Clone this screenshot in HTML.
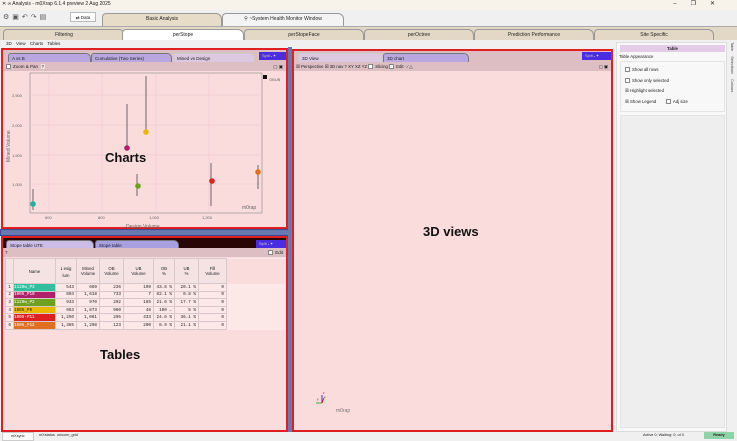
<!DOCTYPE html>
<html><head><meta charset="utf-8"><style>
*{box-sizing:border-box;margin:0;padding:0}
body{width:737px;height:439px;overflow:hidden;background:#f0f0f0;font-family:"Liberation Sans",sans-serif;font-size:5px;color:#222;position:relative}
.a{position:absolute}
.tab{position:absolute;border:1px solid #999;border-bottom:none;border-radius:4px 6px 0 0;text-align:center;font-size:5px;line-height:11px}
.pt{position:absolute;height:9px;border-radius:3px 5px 0 0;font-size:4.5px;line-height:9px;padding-left:3px;border:1px solid #777;border-bottom:none}
.red{position:absolute;border:2px solid #e02020;background:#fadcdc}
.bar{position:absolute;background:#ddbfc3}
.cb{display:inline-block;width:5px;height:5px;border:1px solid #888;background:#fff;vertical-align:middle;margin-right:2px}
table{border-collapse:collapse;font-size:4.3px}
td{border:1px solid #d9c8cb;height:7.6px;text-align:right;padding-right:2px;font-family:"Liberation Mono",monospace}
th{border:1px solid #d9c8cb;background:#f5e3e4;font-weight:normal;height:25px;text-align:center;font-size:4.3px}
.big{position:absolute;font-weight:bold;font-size:13px;color:#111}
</style></head><body>
<div class="a" style="left:0;top:0;width:737px;height:10px;background:#f7f3ea"></div>
<div class="a" style="left:2px;top:1px;font-size:5px">✕ ∞ Analysis - m0Xrap 6.1.4 preview 2 Aug 2025</div>
<div class="a" style="right:8px;top:0;font-size:6px;letter-spacing:14px">–❐✕</div>
<div class="a" style="left:0;top:10px;width:737px;height:16px;background:#f0f0f0"></div>
<div class="a" style="left:3px;top:13px;width:90px;height:10px;font-size:7px;color:#555;letter-spacing:3px">⚙▣↶↷▤</div>
<div class="a" style="left:70px;top:12px;width:26px;height:10px;border:1px solid #bbb;background:#fff;font-size:4.5px;line-height:9px;text-align:center">⇄ Data</div>
<div class="tab" style="left:102px;top:13px;width:120px;height:13px;background:#e6dcc8">Basic Analysis</div>
<div class="tab" style="left:222px;top:13px;width:122px;height:13px;background:#f4f4f4">⚲ ~System Health Monitor Window</div>
<div class="a" style="left:0;top:26px;width:737px;height:14px;background:#e2d8c5;border-top:1px solid #aaa"></div>
<div class="tab" style="left:3px;top:29px;width:122px;height:11px;background:#e2d8c5">Filtering</div>
<div class="tab" style="left:122px;top:29px;width:122px;height:11px;background:#fff">perStope</div>
<div class="tab" style="left:244px;top:29px;width:120px;height:11px;background:#e2d8c5">perStopeFace</div>
<div class="tab" style="left:364px;top:29px;width:110px;height:11px;background:#e2d8c5">perOctree</div>
<div class="tab" style="left:474px;top:29px;width:120px;height:11px;background:#e2d8c5">Prediction Performance</div>
<div class="tab" style="left:594px;top:29px;width:120px;height:11px;background:#e2d8c5">Site Specific</div>
<div class="a" style="left:6px;top:41px;font-size:4.5px;word-spacing:3px">3D&nbsp;View Charts Tables</div>

<!-- charts panel -->
<div class="red" style="left:1px;top:48px;width:287px;height:181px">
 <div class="bar" style="left:0;top:0;width:283px;height:12px"></div>
 <div class="pt" style="left:5px;top:3px;width:83px;background:#b9a8e0">A vs B</div>
 <div class="pt" style="left:88px;top:3px;width:81px;background:#b9a8e0">Cumulative (Two Series)</div>
 <div class="pt" style="left:170px;top:3px;width:82px;background:#dcc8e0;border-color:#ccc">Mined vs Design</div>
 <div class="a" style="left:256px;top:2px;width:27px;height:8px;background:#4a2de0;color:#ccc;font-size:4px;line-height:8px;padding-left:3px">Split <b style="color:#fff">- +</b></div>
 <div class="bar" style="left:0;top:12px;width:283px;height:9px;font-size:4.5px;line-height:9px;padding-left:3px"><span class="cb"></span>Zoom &amp; Pan&nbsp;&nbsp;<span style="background:#f0e0e0;padding:0 1px">?</span><span style="position:absolute;right:3px">▢ ▣</span></div>
</div>
<svg class="a" style="left:0;top:70px" width="290" height="160">
 <rect x="30" y="3" width="232" height="140" fill="#fadcdc" stroke="#888" stroke-width=".6"/>
 <g stroke="#e8c6ca" stroke-width=".5"><line x1="49" y1="3" x2="49" y2="143"/><line x1="102" y1="3" x2="102" y2="143"/><line x1="156" y1="3" x2="156" y2="143"/><line x1="209" y1="3" x2="209" y2="143"/><line x1="30" y1="25" x2="262" y2="25"/><line x1="30" y1="55" x2="262" y2="55"/><line x1="30" y1="85" x2="262" y2="85"/><line x1="30" y1="114" x2="262" y2="114"/></g>
 <g font-size="4" fill="#666" font-family="Liberation Sans"><text x="12" y="27">2,500</text><text x="12" y="57">2,000</text><text x="12" y="87">1,500</text><text x="12" y="116">1,000</text><text x="45" y="149">600</text><text x="98" y="149">800</text><text x="149" y="149">1,000</text><text x="202" y="149">1,200</text><text x="126" y="158" font-size="5">Design Volume</text><text x="10" y="92" font-size="5" transform="rotate(-90 10 92)">Mined Volume</text><text x="242" y="139" font-size="5">m0rap</text><text x="269" y="11">OBUB</text></g>
 <rect x="263" y="5" width="4" height="4" fill="#111"/>
 <g stroke="#333" stroke-width=".7"><line x1="33" y1="119" x2="33" y2="140"/><line x1="127" y1="34" x2="127" y2="78"/><line x1="146" y1="6" x2="146" y2="62"/><line x1="137" y1="104" x2="137" y2="126"/><line x1="211" y1="93" x2="211" y2="136"/><line x1="258" y1="95" x2="258" y2="119"/></g>
 <circle cx="33" cy="134" r="2.8" fill="#20b0a0"/><circle cx="127" cy="78" r="2.8" fill="#b0206a"/><circle cx="146" cy="62" r="2.8" fill="#e8b800"/><circle cx="138" cy="116" r="2.8" fill="#70a020"/><circle cx="212" cy="111" r="2.8" fill="#e02020"/><circle cx="258" cy="102" r="2.8" fill="#e07020"/>
</svg>
<div class="big" style="left:105px;top:150px">Charts</div>
<div class="a" style="left:0;top:229px;width:289px;height:7px;background:#6878b0;border:1px solid #3a4a90"></div>
<div class="a" style="left:288px;top:47px;width:4px;height:385px;background:#6878b0"></div>

<!-- tables panel -->
<div class="red" style="left:1px;top:236px;width:287px;height:196px">
 <div class="a" style="left:0;top:0;width:283px;height:10px;background:#2a0505"></div>
 <div class="pt" style="left:3px;top:2px;width:88px;background:#cbbce8">Stope table UTE</div>
 <div class="pt" style="left:92px;top:2px;width:84px;background:#a8a0e0">Stope table</div>
 <div class="a" style="left:253px;top:2px;width:30px;height:8px;background:#4a2de0;color:#ccc;font-size:4px;line-height:8px;padding-left:3px">Split <b style="color:#fff">- +</b></div>
 <div class="bar" style="left:0;top:10px;width:283px;height:9px;font-size:4.5px;padding-left:2px;line-height:9px">?<span style="position:absolute;right:3px"><span class="cb"></span>Edit</span></div>
 <table class="a" style="left:2px;top:20px;background:#fde8e8">
 <tr><th style="width:8px"></th><th style="width:42px">Name</th><th style="width:21px">🠗 esig<br>lum</th><th style="width:23px">Mined<br>Volume</th><th style="width:24px">OB<br>Volume</th><th style="width:30px">UB<br>Volume</th><th style="width:21px">OB<br>%</th><th style="width:24px">UB<br>%</th><th style="width:28px">Fill<br>Volume</th><th style="width:58px;border:none;background:#fadcdc"></th></tr>
 <tr><td>1</td><td style="background:#30c0a0;text-align:left;color:#fff">1120w_P3</td><td>543</td><td>669</td><td>236</td><td>109</td><td>43.6 %</td><td>20.1 %</td><td>0</td></tr>
 <tr><td>2</td><td style="background:#b0206a;text-align:left;color:#fff">1005_P10</td><td>894</td><td>1,618</td><td>733</td><td>7</td><td>82.1 %</td><td>0.8 %</td><td>0</td></tr>
 <tr><td>3</td><td style="background:#70a020;text-align:left;color:#fff">1120w_P2</td><td>933</td><td>970</td><td>202</td><td>165</td><td>21.6 %</td><td>17.7 %</td><td>0</td></tr>
 <tr><td>4</td><td style="background:#e8b800;text-align:left">1005_P9</td><td>963</td><td>1,873</td><td>960</td><td>48</td><td>100 …</td><td>5 %</td><td>0</td></tr>
 <tr><td>5</td><td style="background:#e02020;text-align:left;color:#fff">1005-P11</td><td>1,250</td><td>1,061</td><td>295</td><td>433</td><td>24.6 %</td><td>36.1 %</td><td>0</td></tr>
 <tr><td>6</td><td style="background:#e07020;text-align:left;color:#fff">1005_P12</td><td>1,385</td><td>1,208</td><td>123</td><td>290</td><td>8.9 %</td><td>21.1 %</td><td>0</td></tr>
 </table>
</div>
<div class="big" style="left:100px;top:347px">Tables</div>

<!-- 3D panel -->
<div class="red" style="left:292px;top:49px;width:321px;height:383px">
 <div class="bar" style="left:0;top:0;width:317px;height:11px"></div>
 <div class="pt" style="left:4px;top:2px;width:85px;background:#dcc8e0;border-color:#ccc">3D View</div>
 <div class="pt" style="left:89px;top:2px;width:86px;background:#b9a8e0">3D chart</div>
 <div class="a" style="left:288px;top:1px;width:29px;height:8px;background:#4a2de0;color:#ccc;font-size:4px;line-height:8px;padding-left:3px">Split <b style="color:#fff">- +</b></div>
 <div class="bar" style="left:0;top:11px;width:317px;height:9px;font-size:4.3px;line-height:9px;padding-left:2px">☒ Perspective ☒ 3D nav ? XY XZ YZ <span class="cb"></span>Slicing <span class="cb"></span>Edit · ⁄ △<span style="position:absolute;right:3px">▢ ▣</span></div>
 <svg class="a" style="left:14px;top:337px" width="20" height="20"><line x1="8" y1="15" x2="14" y2="15" stroke="#4a4" stroke-width="1"/><line x1="14" y1="15" x2="14" y2="7" stroke="#33c" stroke-width="1"/><line x1="14" y1="15" x2="16" y2="10" stroke="#d22" stroke-width="1"/><text x="15" y="6" font-size="3">z</text><text x="9" y="12" font-size="3">y</text><text x="16" y="10" font-size="3">x</text></svg>
 <div class="a" style="left:42px;top:357px;font-size:5px;color:#777">m0rap</div>
</div>
<div class="big" style="left:423px;top:224px">3D views</div>

<!-- right panel -->
<div class="a" style="left:616px;top:42px;width:111px;height:390px;background:#f8f8f8;border:1px solid #ddd">
 <div class="a" style="left:3px;top:2px;width:105px;height:7px;background:#e4cce8;text-align:center;font-weight:bold;font-size:4.3px;line-height:7px">Table</div>
 <div class="a" style="left:2px;top:11px;font-size:4.3px">Table Appearance</div>
 <div class="a" style="left:3px;top:18px;width:105px;height:51px;border:1px solid #e4e4e4;font-size:4.3px;line-height:10.5px;padding:3px 0 0 4px">
  <div><span class="cb"></span>Show all rows</div><div><span class="cb"></span>Show only selected</div><div>☒ Highlight selected</div><div>☒ Show Legend &nbsp;&nbsp;&nbsp;&nbsp;&nbsp;&nbsp;&nbsp;<span class="cb"></span>Adj size</div>
 </div>
 <div class="a" style="left:3px;top:72px;width:105px;height:313px;background:#eee;border:1px solid #e4e4e4"></div>
</div>
<div class="a" style="left:728px;top:42px;width:8px;height:80px;font-size:3.8px;color:#444;writing-mode:vertical-rl;line-height:8px">Table &nbsp;&nbsp;&nbsp; Selections &nbsp;&nbsp;&nbsp; Colours</div>

<!-- status bar -->
<div class="a" style="left:0;top:432px;width:737px;height:7px;background:#f0f0f0;font-size:3.8px;line-height:7px">
 <span style="position:absolute;left:2px;border:1px solid #ccc;padding:0 8px;background:#fafafa">mXsync</span>
 <span style="position:absolute;left:39px">mXstatus &nbsp;unicorn_grid</span>
 <span style="position:absolute;left:643px">Active 0; Waiting: 0; of 0</span>
 <span style="position:absolute;left:704px;width:30px;background:#8ed4a8;text-align:center;font-weight:bold">Ready</span>
</div>
</body></html>
